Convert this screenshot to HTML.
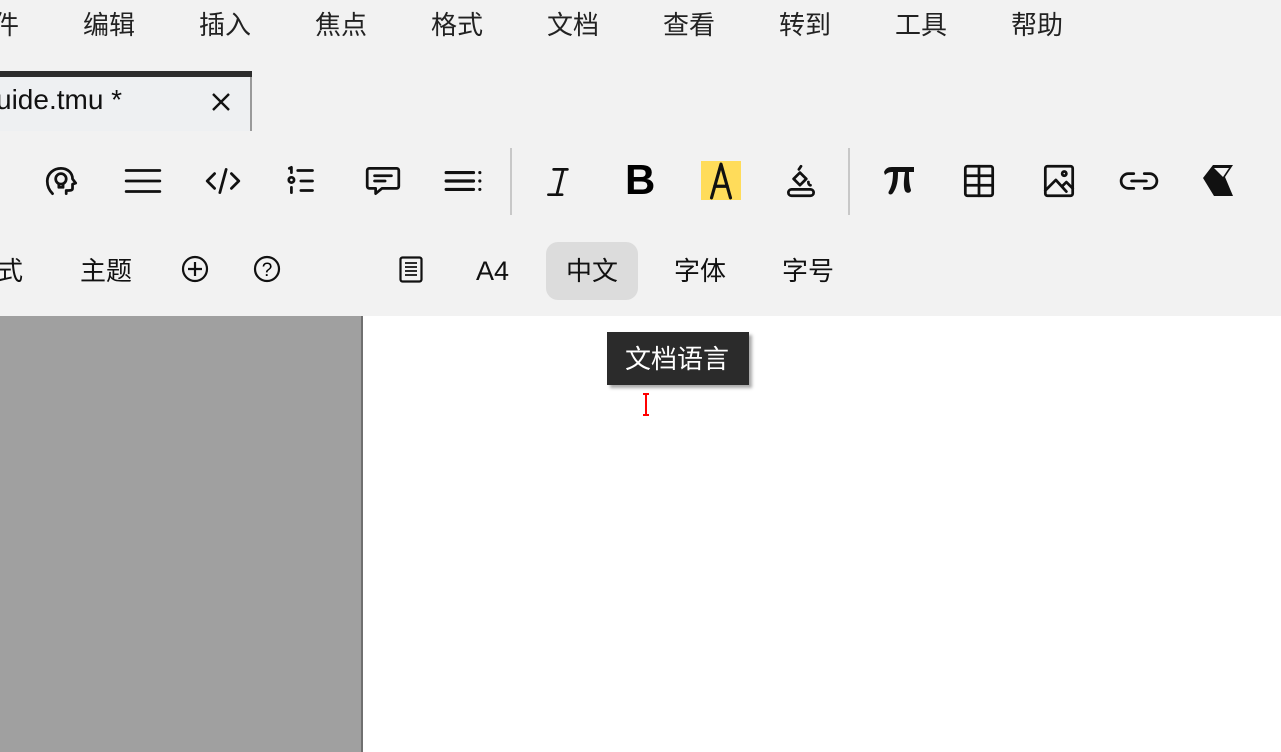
<!DOCTYPE html>
<html><head><meta charset="utf-8"><style>
*{margin:0;padding:0;box-sizing:border-box}
body{width:1281px;height:752px;background:#f2f2f2;position:relative;overflow:hidden;font-family:"Liberation Sans","Noto Sans CJK SC",sans-serif;color:#111}
.t{position:absolute;font-size:26px;line-height:30px;white-space:nowrap}
.m{color:#222;top:10px}
.r2{top:256px}
.ic{position:absolute;top:161px;width:40px;height:40px}
.ic svg{width:40px;height:40px;fill:none;stroke:#111;stroke-width:2.6;stroke-linecap:round;stroke-linejoin:round}
</style></head><body>
<div class="t m" style="left:-7px">件</div>
<div class="t m" style="left:83px">编辑</div>
<div class="t m" style="left:199px">插入</div>
<div class="t m" style="left:315px">焦点</div>
<div class="t m" style="left:431px">格式</div>
<div class="t m" style="left:547px">文档</div>
<div class="t m" style="left:663px">查看</div>
<div class="t m" style="left:779px">转到</div>
<div class="t m" style="left:895px">工具</div>
<div class="t m" style="left:1011px">帮助</div>

<div style="position:absolute;left:0;top:71px;width:252px;height:6px;background:#2d2d2d"></div>
<div style="position:absolute;left:0;top:77px;width:252px;height:54px;background:#eef0f2;border-right:2px solid #9a9a9a"></div>
<div class="t" style="left:-4px;top:85px;font-size:28px">uide.tmu *</div>
<svg style="position:absolute;left:211px;top:92px" width="20" height="20"><path d="M2 2L18 18M18 2L2 18" stroke="#111" stroke-width="2.4"/></svg>

<!-- toolbar -->
<div class="ic" style="left:42px"><svg viewBox="0 0 38 38"><path d="M10 31c-3-3-5-7-5-12 0-7 6-12 13-12 6 0 11 4 11 10l3 4-3 1v4c0 2-2 2-4 2l-2 0v3"/><circle cx="18" cy="17" r="5"/><path d="M16 22v3h4v-3"/></svg></div>
<div class="ic" style="left:123px"><svg viewBox="0 0 38 38"><path d="M3 9h32M3 19h32M3 29h32"/></svg></div>
<div class="ic" style="left:203px"><svg viewBox="0 0 38 38"><path d="M11 12l-7 7 7 7M27 12l7 7-7 7M22 8l-6 22"/></svg></div>
<div class="ic" style="left:283px"><svg viewBox="0 0 38 38"><path d="M14 9h14M17 19h11M17 28h11M6 7l2-1v5"/><circle cx="8" cy="18" r="2.5"/><path d="M8 25v5"/></svg></div>
<div class="ic" style="left:363px"><svg viewBox="0 0 38 38"><path d="M6 7h26a2 2 0 0 1 2 2v15a2 2 0 0 1-2 2H18l-6 5v-5H6a2 2 0 0 1-2-2V9a2 2 0 0 1 2-2zM11 14h16M11 19h10"/></svg></div>
<div class="ic" style="left:443px"><svg viewBox="0 0 38 38"><path d="M3 11h26M3 19h26M3 27h26M35 11v0M35 19v0M35 27v0" stroke-width="3"/></svg></div>
<div style="position:absolute;left:510px;top:148px;width:2px;height:67px;background:#c8c8c8"></div>
<div class="ic" style="left:540px"><svg viewBox="0 0 38 38"><path d="M13 8h13M8 32h13M22 8l-6 24"/></svg></div>
<div class="t" style="left:625px;top:157px;font-size:42px;line-height:46px;font-weight:bold;color:#000">B</div>
<div style="position:absolute;left:701px;top:161px;width:40px;height:39px;background:#ffdc5a"></div>
<div class="ic" style="left:701px"><svg viewBox="0 0 38 38"><path d="M10 35L19 3l9 32M13 24h12" stroke-width="3"/></svg></div>
<div class="ic" style="left:781px"><svg viewBox="0 0 38 38"><path d="M10 27h18a3 3 0 0 1 0 6H10a3 3 0 0 1 0-6zM12 17l6-6 6 6-6 6zM17 8l2-3M26 20c0 2 1 3 2 3"/></svg></div>
<div style="position:absolute;left:848px;top:148px;width:2px;height:67px;background:#c8c8c8"></div>
<svg style="position:absolute;left:882px;top:163px" width="34" height="34" viewBox="0 0 34 34"><path d="M2 9c2-4 4-5 8-5h22v5h-5c0 7 0 12 2 18 0 3-4 4-6 1-2-5-1-12 0-19h-7c0 9-1 15-5 21-2 3-6 1-4-2 3-5 4-11 4-19-4 0-6 1-8 3z" fill="#111"/></svg>
<div class="ic" style="left:959px"><svg viewBox="0 0 38 38"><rect x="6" y="5" width="26" height="28" rx="2"/><path d="M6 14h26M6 23h26M19 5v28"/></svg></div>
<div class="ic" style="left:1039px"><svg viewBox="0 0 38 38"><rect x="6" y="5" width="26" height="28" rx="2"/><circle cx="24" cy="12" r="2"/><path d="M6 28l10-10 10 11M22 24l4-4 6 6"/></svg></div>
<div class="ic" style="left:1119px"><svg viewBox="0 0 38 38"><path d="M14 12H9a7 7 0 0 0 0 14h5M24 12h5a7 7 0 0 1 0 14h-5M12 19h14"/></svg></div>
<svg style="position:absolute;left:1200px;top:162px" width="38" height="38" viewBox="0 0 38 38"><path d="M13 3h20l-8 12 8 19H14L3 16z" fill="#111"/><path d="M14 6h15l-6 9z" fill="#f2f2f2"/></svg>

<!-- row 2 -->
<div class="t r2" style="left:-3px">式</div>
<div class="t r2" style="left:80px">主题</div>
<svg style="position:absolute;left:181px;top:255px" width="28" height="28"><circle cx="14" cy="14" r="12" fill="none" stroke="#111" stroke-width="2.2"/><path d="M14 7v14M7 14h14" stroke="#111" stroke-width="2.2"/></svg>
<svg style="position:absolute;left:253px;top:255px" width="28" height="28"><circle cx="14" cy="14" r="12" fill="none" stroke="#111" stroke-width="2.2"/><text x="14" y="21" text-anchor="middle" font-size="19" font-family="Liberation Sans">?</text></svg>
<svg style="position:absolute;left:399px;top:256px" width="24" height="27"><rect x="1.5" y="1.5" width="21" height="24" rx="2" fill="none" stroke="#111" stroke-width="2.2"/><path d="M6 7h12M6 11h12M6 15h12M6 19h12" stroke="#111" stroke-width="1.8"/></svg>
<div class="t r2" style="left:476px;font-size:27px">A4</div>
<div style="position:absolute;left:546px;top:242px;width:92px;height:58px;background:#dcdcdc;border-radius:12px"></div>
<div class="t r2" style="left:566px">中文</div>
<div class="t r2" style="left:674px">字体</div>
<div class="t r2" style="left:782px">字号</div>

<!-- content -->
<div style="position:absolute;left:0;top:316px;width:363px;height:436px;background:#a0a0a0;border-right:2px solid #707070"></div>
<div style="position:absolute;left:363px;top:316px;width:918px;height:436px;background:#fff"></div>
<div style="position:absolute;left:607px;top:332px;width:142px;height:53px;background:#2b2b2b;box-shadow:3px 3px 3px #aaa"></div>
<div class="t" style="left:625px;top:344px;color:#fff;font-size:26px">文档语言</div>
<svg style="position:absolute;left:641px;top:393px" width="10" height="24"><path d="M2 1h6M2 22h6M5 1v21" stroke="#f00" stroke-width="2"/></svg>
</body></html>
